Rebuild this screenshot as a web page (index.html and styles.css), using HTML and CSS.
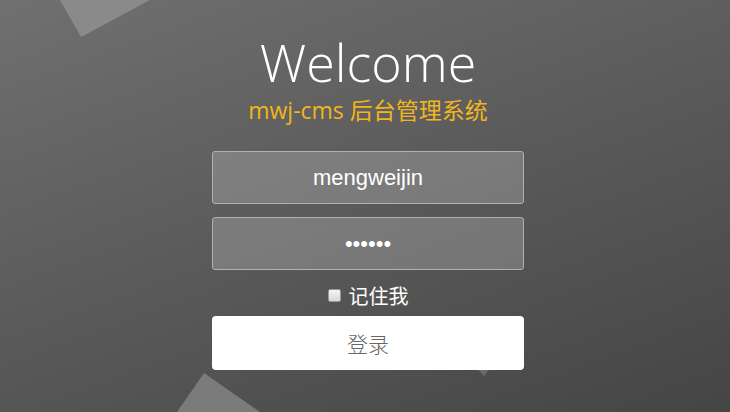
FILE: index.html
```html
<!DOCTYPE html>
<html>
<head>
<meta charset="utf-8">
<link rel="stylesheet" href="styles.css">
</head>
<body>
<div class="bg">
  <svg class="shapes" width="730" height="412" viewBox="0 0 730 412">
    <polygon points="60,0 81,37 150,0" fill="#8a8a8a"/>
    <polygon points="204,373 177,412 260,412" fill="#7b7b7b"/>
    <polygon points="440,330 520,330 484,376" fill="#6a6a6a"/>
  </svg>
  <main class="login">
    <h1 class="title">Welcome</h1>
    <p class="subtitle">mwj-cms 后台管理系统</p>
    <form class="form">
      <input class="field" type="text" value="mengweijin">
      <input class="field" type="password" value="123456">
      <label class="remember"><span class="box"></span><span>记住我</span></label>
      <button class="btn" type="button">登录</button>
    </form>
  </main>
</div>
</body>
</html>
```
FILE: styles.css
```css
html, body {
  margin: 0;
  padding: 0;
  width: 730px;
  height: 412px;
  overflow: hidden;
}
.bg {
  position: relative;
  width: 730px;
  height: 412px;
  background: linear-gradient(160deg, #707070 0%, #5c5c5c 45%, #454545 100%);
  overflow: hidden;
}
.shapes {
  position: absolute;
  left: 0;
  top: 0;
}
.login {
  position: relative;
  display: flex;
  flex-direction: column;
  align-items: center;
  padding-top: 30px;
  padding-left: 6px;
}
.title {
  margin: 0;
  font-family: "Open Sans", "Lato", sans-serif;
  font-weight: 300;
  font-size: 52px;
  line-height: 64px;
  color: #fff;
}
.subtitle {
  margin: 1px 0 0;
  font-family: "Open Sans", "Noto Sans CJK SC", sans-serif;
  font-size: 23px;
  line-height: 30px;
  color: #f2b51c;
}
.form {
  margin-top: 26px;
  width: 312px;
  display: flex;
  flex-direction: column;
  align-items: center;
}
.field {
  box-sizing: border-box;
  width: 312px;
  height: 53px;
  margin: 0 0 13px;
  border: 1px solid #b0b0b0;
  border-radius: 3px;
  background: rgba(255,255,255,0.2);
  color: #fff;
  font-family: "Liberation Sans", Arial, sans-serif;
  font-size: 22px;
  text-align: center;
  outline: none;
}
.field:nth-of-type(2) {
  margin-bottom: 0;
}
.remember {
  display: flex;
  align-items: center;
  gap: 8px;
  height: 34px;
  margin: 8px 0 4px;
  font-family: "Noto Sans CJK SC", sans-serif;
  font-size: 20px;
  color: #fff;
}
.box {
  width: 11px;
  height: 11px;
  border: 1px solid #999;
  border-radius: 2px;
  background: linear-gradient(#f4f4f4, #d8d8d8);
}
.btn {
  width: 312px;
  height: 54px;
  border: none;
  border-radius: 4px;
  background: #fff;
  color: #666;
  font-family: "Noto Sans CJK SC", sans-serif;
  font-size: 21px;
  font-weight: 300;
  padding: 0;
}
```
